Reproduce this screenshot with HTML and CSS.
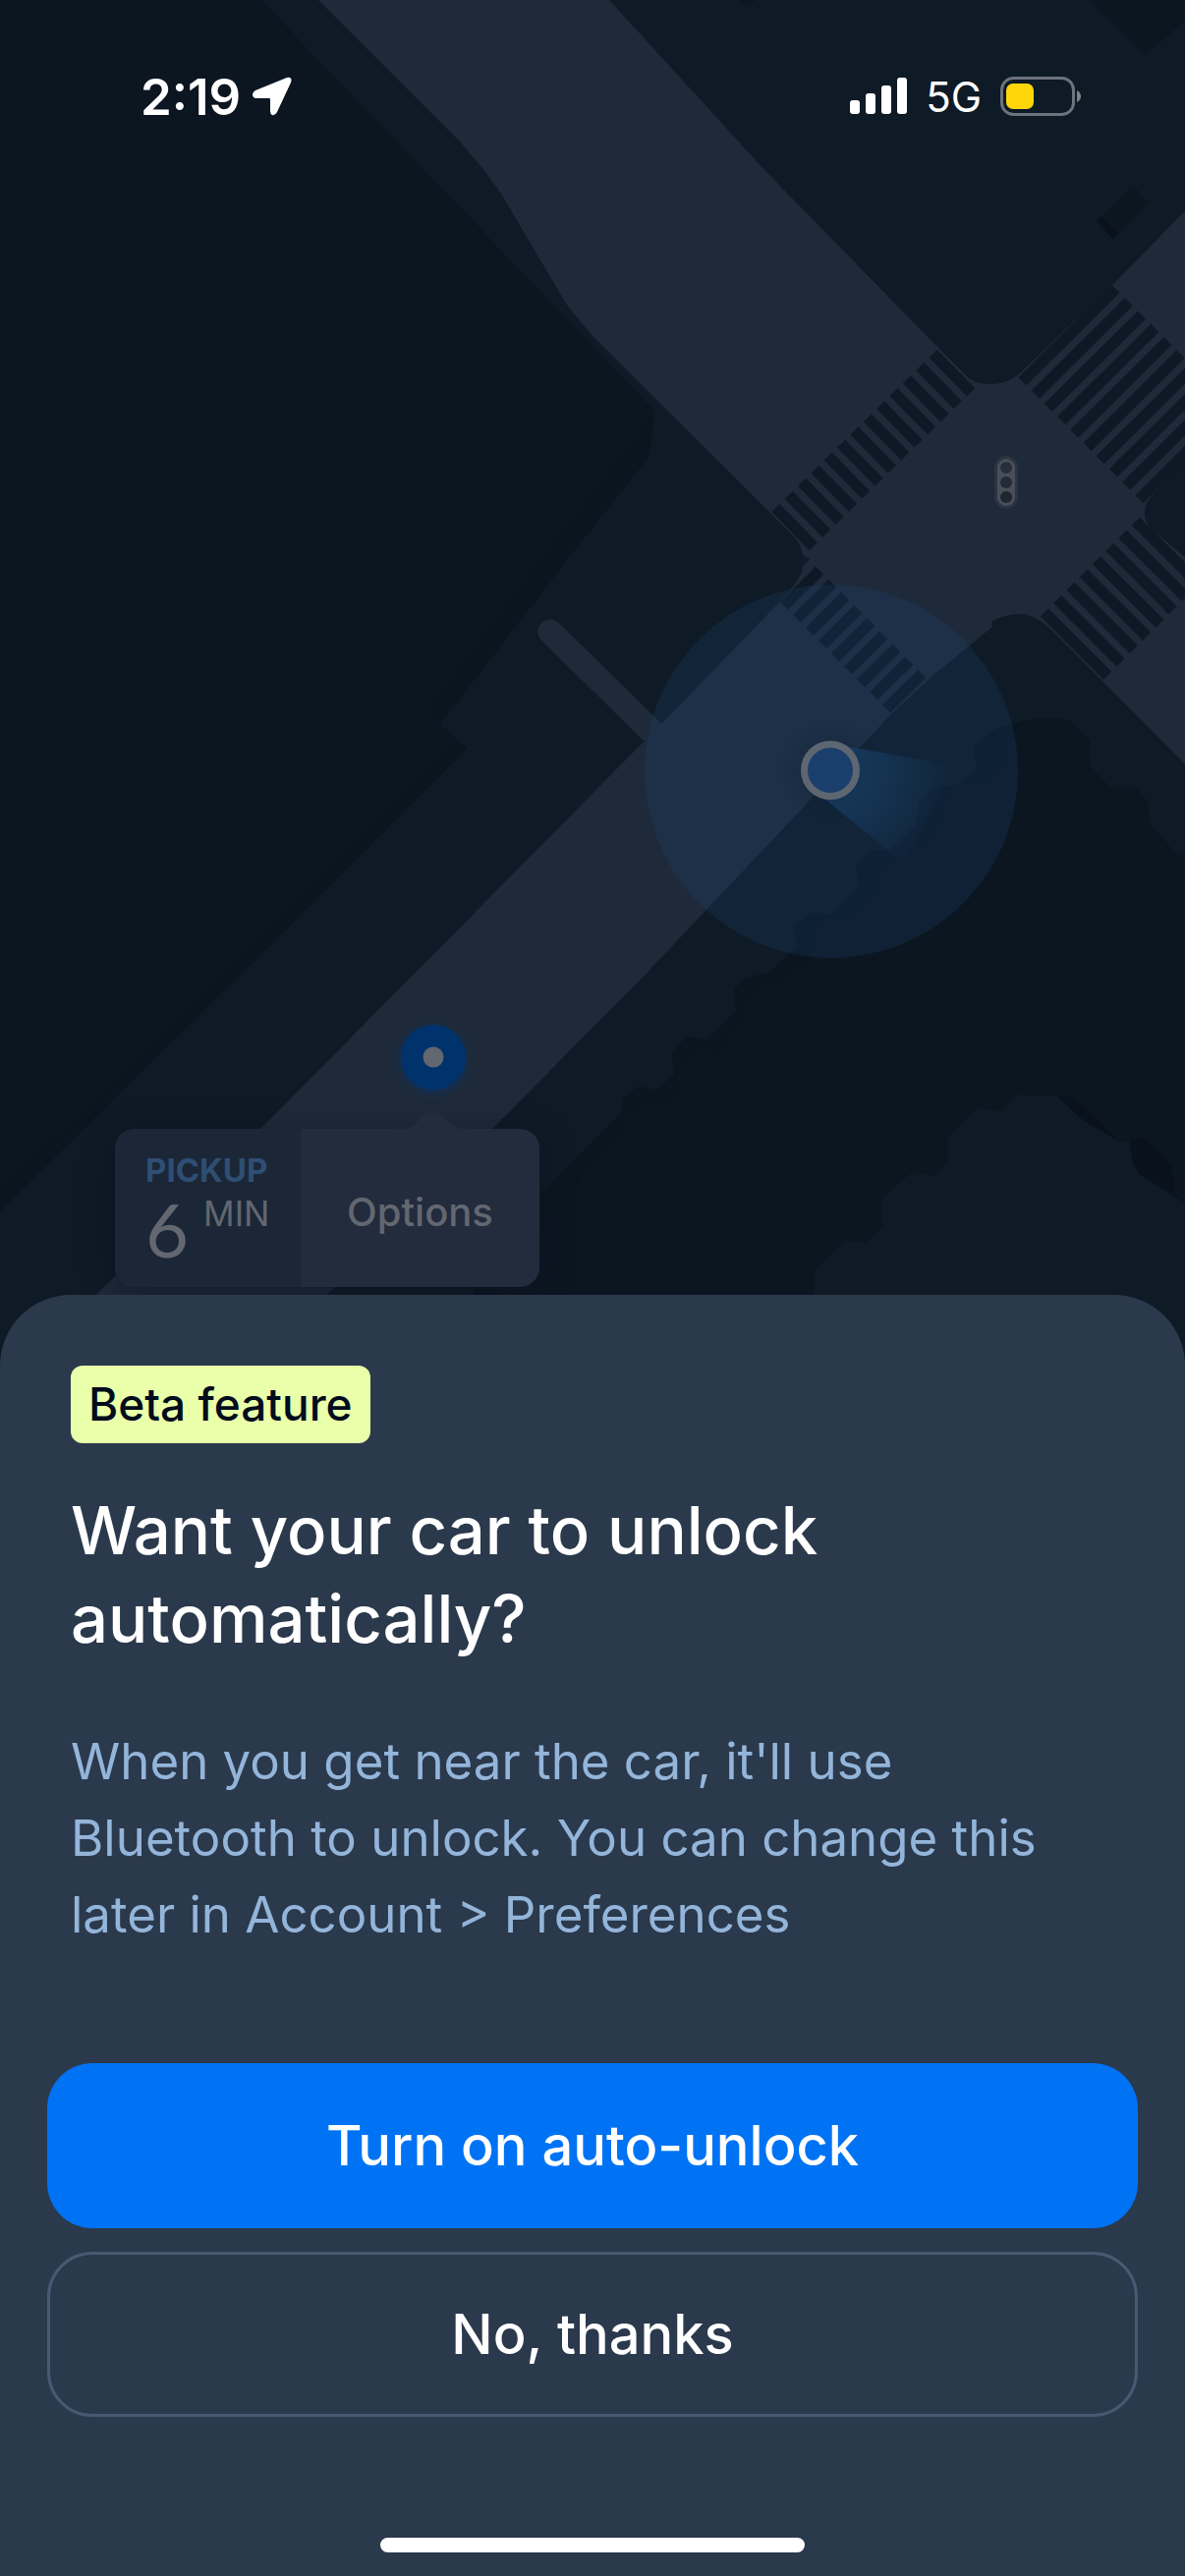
FILE: index.html
```html
<!DOCTYPE html>
<html lang="en">
	<head>
		<meta charset="utf-8">
		<meta name="viewport" content="width=device-width, initial-scale=1">
		<title>Auto-unlock</title>
		<link rel="stylesheet" href="styles.css">
	</head>
	<body>
		<div class="screen">
			<svg class="map" viewBox="0 0 1206 1450" preserveAspectRatio="xMinYMin slice" aria-hidden="true">
				<defs>
					<radialGradient id="beam" gradientUnits="userSpaceOnUse" cx="845" cy="784" r="124">
						<stop offset="0.3" stop-color="#1a4878" stop-opacity="0.5"/>
						<stop offset="1" stop-color="#1a4878" stop-opacity="0"/>
					</radialGradient>
					<radialGradient id="halo">
						<stop offset="0.5" stop-color="#0c1a2a" stop-opacity="0.2"/>
						<stop offset="1" stop-color="#0c1a2a" stop-opacity="0"/>
					</radialGradient>
				</defs>
				<rect class="ground" width="1206" height="1450"/>

				<!-- buildings -->
				<path class="side" d="M0 0H265L603 352L666 419L661 464L585 560L448 737L476 762L176 1060L0 1233Z"/>
				<path class="roof" d="M0 0H265L603 352L666 419L556 560L433 724L461 752L158 1060L0 1208Z"/>
				<path class="side" d="M1206 870L1195 867L1169 838L1168 816L1155 801H1129L1110 781L1109 753L1088 733L1068 731L1045 733L1013 742L990 761L994 783L974 799L951 802L934 818L933 839L905 865H886L871 881L874 902L846 930L826 929L808 941L811 964L782 990L757 996L747 1008L749 1028L720 1058L698 1055L684 1073L686 1094L668 1109L649 1106L633 1118L632 1133L603 1162L549 1217L482 1290V1450H1206Z"/>
				<path class="roof" d="M1206 870L1195 867L1169 838L1168 816L1155 801H1129L1110 781L1109 753L1088 733L1068 731L1045 733L1022 755L1025 777L1001 797L974 799L959 822L958 839L936 862L905 878L891 889L894 905L866 937L845 936L824 947L827 975L798 1002L768 1008L759 1020L760 1038L729 1074L705 1071L691 1092V1115L671 1130L653 1127L636 1138L635 1155L623 1165L560 1235L500 1318V1450H1206Z"/>
				<path class="ground" d="M828 1450L829 1294L859 1263L881 1265L899 1249L896 1222L928 1193L951 1197L965 1183V1158L995 1128L1018 1131L1036 1114L1076 1116L1101 1139L1141 1163L1149 1161L1153 1185L1162 1197L1206 1224V1450Z"/>
				<path class="edge" d="M1076 1116L1093 1117L1141 1163L1101 1139ZM1149 1161L1163 1157L1192 1185L1195 1213L1206 1224L1162 1197L1153 1185Z"/>
				<path class="roof" d="M1108 0L1166 57L1206 20V0ZM752 0L761 8L769 0ZM1153 189L1169 206L1133 243L1116 225Z"/>
				<path class="edge" d="M1116 225L1133 243L1138 238L1121 221Z"/>

				<!-- roads -->
				<path class="road" d="M324 0L469 145L490 170L510 197L576 309L603 342L805 543Q815 552 817 565L824 569L817 576Q817 588 794 612L673 737L658 752L403 1010L265 1149L96 1320L60 1356H294L341 1310L501 1149L649 1000L907 727L949 688L1010 638L1009 633Q1022 625 1039 625Q1055 625 1076 647L1122 693L1206 778V567L1170 537Q1160 522 1170 507L1206 468V215L1133 289L1040 378Q1026 391 1008 391Q990 391 982 381L955 354L780 175L620 0Z"/>
				<path class="lane" d="M560 643L672 753"/>

				<!-- crosswalks -->
				<path class="stripes" stroke-width="55" stroke-dasharray="11.5 7.19" d="M804.5 540.5L973 375.5"/>
				<path class="stripes" stroke-width="134" stroke-dasharray="11.5 7.25" d="M1084 337L1211 465"/>
				<path class="stripes" stroke-width="91" stroke-dasharray="11.5 7.25" d="M1091 659.5L1192 558.5"/>
				<path class="stripes" stroke-width="51" stroke-dasharray="11.5 7" d="M812 594.5L924.5 708"/>

				<!-- traffic light -->
				<rect x="1012" y="464" width="24" height="54" rx="12" fill="#2c3440"/>
				<rect x="1015" y="467" width="18" height="48" rx="9" fill="#484f59"/>
				<circle cx="1024" cy="476" r="6" fill="#262f3b"/>
				<circle cx="1024" cy="491" r="6" fill="#222b37"/>
				<circle cx="1024" cy="506" r="6" fill="#1e2632"/>

				<!-- current location -->
				<circle cx="846" cy="785" r="190" fill="#1a4275" fill-opacity="0.25"/>
				<circle cx="845" cy="784" r="56" fill="url(#halo)"/>
				<path fill="url(#beam)" d="M845 757L972 779L920 879L838 812Z"/>
				<circle cx="845" cy="784" r="26.500" fill="#1b3f6c" stroke="#5e6671" stroke-width="7"/>

				<!-- pickup pin -->
				<circle class="pin" cx="441" cy="1076" r="33"/>
				<circle cx="441" cy="1076" r="10.500" fill="#63676f"/>
			</svg>

			<div class="map-area">
				<header class="status">
					<div class="status-left">
						<span class="time">2:19</span>
						<svg width="40" height="40" viewBox="0 0 40 40" aria-hidden="true">
							<path fill="#fff" d="M35 1Q41 0 39 6L25 36Q23 40 20 39Q18 38 18 35V23Q18 22 17 22H4Q0 22 0 18Q0 16 3 14Z"/>
						</svg>
					</div>
					<div class="status-right">
						<svg width="58" height="38" viewBox="0 0 58 38" fill="#fff" aria-hidden="true">
							<rect x="0" y="23" width="10" height="14" rx="3"/>
							<rect x="16" y="16" width="10" height="21" rx="3"/>
							<rect x="32" y="8" width="10" height="29" rx="3"/>
							<rect x="48" y="0" width="10" height="37" rx="3"/>
						</svg>
						<span class="network">5G</span>
						<svg width="82" height="40" viewBox="0 0 82 40" aria-hidden="true">
							<rect x="1.500" y="1.500" width="73" height="37" rx="12" fill="none" stroke="#6b737d" stroke-width="3"/>
							<rect x="6" y="7" width="28" height="26" rx="7" fill="#ffd60a"/>
							<path fill="#7c838c" d="M78 14Q82 16 82 20Q82 24 78 26Z"/>
						</svg>
					</div>
				</header>

				<div class="pickup">
					<svg class="pickup-tip" width="76" height="18" viewBox="0 0 76 18" aria-hidden="true">
						<path fill="#222c3d" d="M0 18C16 18 21 10 28 3Q37 -3 46 3C53 10 60 18 76 18Z"/>
					</svg>
					<div class="pickup-eta">
						<span class="pickup-label">PICKUP</span>
						<div class="pickup-time">
							<span class="pickup-num">6</span>
							<span class="pickup-unit">MIN</span>
						</div>
					</div>
					<button type="button" class="pickup-options">Options</button>
				</div>
			</div>

			<main class="sheet">
				<div class="sheet-text">
					<span class="badge">Beta feature</span>
					<h1>Want your car to unlock automatically?</h1>
					<p>When you get near the car, it'll use Bluetooth to unlock. You can change this later in Account &gt; Preferences</p>
				</div>
				<div class="actions">
					<button type="button" class="btn btn-primary">Turn on auto-unlock</button>
					<button type="button" class="btn btn-outline">No, thanks</button>
				</div>
				<div class="home-bar"></div>
			</main>
		</div>
	</body>
</html>
```

FILE: styles.css
```css
* {
	box-sizing: border-box;
}

body {
	margin: 0;
	background-color: #0e1a25;
	color: #ffffff;
	font-family: Inter, "Open Sans", sans-serif;
}

button {
	border: 0;
	font-family: inherit;
	cursor: pointer;
}

.screen {
	position: relative;
	display: flex;
	flex-direction: column;
	min-height: 100vh;
	overflow: hidden;
}

/* map */

.map {
	position: absolute;
	top: 0;
	left: 0;
	width: 100%;
	height: 1450px;
}

.ground {
	fill: #0e1a25;
}

.roof {
	fill: #0c1621;
}

.side {
	fill: #0a151f;
}

.edge {
	fill: #09121c;
}

.road {
	fill: #1e2a39;
}

.lane {
	fill: none;
	stroke: #1e2a39;
	stroke-width: 25;
	stroke-linecap: round;
}

.stripes {
	fill: none;
	stroke: #0d1a25;
}

.pin {
	fill: #00336c;
	filter: drop-shadow(0 3px 5px #0b3161);
}

.map-area {
	position: relative;
	flex: 1;
	min-height: 1318px;
}

/* status bar */

.status {
	display: flex;
	justify-content: space-between;
	align-items: center;
	height: 196px;
	padding: 0 106px 0 143px;
}

.status-left,
.status-right {
	display: flex;
	align-items: center;
}

.status-left {
	gap: 12px;
}

.status-right {
	gap: 19px;
}

.time {
	font-size: 51px;
	font-weight: 600;
}

.network {
	font-size: 42px;
}

/* pickup callout */

.pickup {
	position: absolute;
	left: 117px;
	top: 1149px;
	display: flex;
	height: 161px;
	border-radius: 20px;
	background-color: #222c3d;
	box-shadow: 0 8px 32px rgba(12, 18, 32, 0.6);
}

.pickup-tip {
	position: absolute;
	left: 286px;
	top: -17px;
}

.pickup-eta {
	display: flex;
	flex-direction: column;
	width: 189px;
	padding: 20px 0 0 31px;
	border-radius: 20px 0 0 20px;
	background-color: #1b2737;
}

.pickup-label {
	color: #2f4e73;
	font-size: 33px;
	font-weight: 700;
	line-height: 44px;
}

.pickup-time {
	display: flex;
	gap: 15px;
	color: #626770;
}

.pickup-num {
	font-family: Lato, sans-serif;
	font-size: 76px;
	line-height: 76px;
}

.pickup-unit {
	font-size: 35px;
	line-height: 44px;
}

.pickup-options {
	width: 243px;
	padding: 8px 0 0;
	border-radius: 0 20px 20px 0;
	background-color: transparent;
	color: #626770;
	font-size: 40px;
	font-weight: 500;
}

/* bottom sheet */

.sheet {
	position: relative;
	display: flex;
	flex-direction: column;
	padding: 72px 48px 24px;
	border-radius: 72px 72px 0 0;
	background-color: #2b394c;
}

.sheet-text {
	display: flex;
	flex-direction: column;
	align-items: flex-start;
	padding: 0 24px;
}

.badge {
	padding: 0 18px;
	border-radius: 12px;
	background-color: #e9ffaa;
	color: #020c1b;
	font-size: 46px;
	font-weight: 500;
	line-height: 79px;
}

h1 {
	margin: 44px 0 61px;
	font-size: 67px;
	font-weight: 500;
	line-height: 90px;
}

p {
	margin: 0;
	color: #94b5da;
	font-size: 51px;
	line-height: 78px;
}

.actions {
	display: flex;
	flex-direction: column;
	gap: 24px;
	margin-top: 112px;
}

.btn {
	height: 168px;
	border-radius: 46px;
	color: #ffffff;
	font-size: 56px;
	font-weight: 500;
}

.btn-primary {
	background-color: #0073f5;
}

.btn-outline {
	border: 3px solid #485a73;
	background-color: transparent;
}

.home-bar {
	align-self: center;
	width: 432px;
	height: 15px;
	margin-top: 123px;
	border-radius: 8px;
	background-color: #ffffff;
}
```
